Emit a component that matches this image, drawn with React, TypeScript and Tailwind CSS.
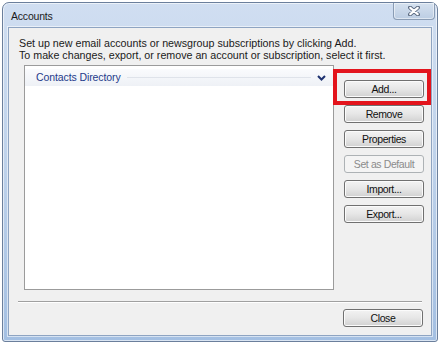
import React from 'react';

const font = { fontFamily: '"Liberation Sans", Arial, sans-serif' };

function WinButton({ label, disabled }: { label: string; disabled?: boolean }) {
  return (
    <button
      disabled={disabled}
      className={
        disabled
          ? 'relative h-[18px] w-[80px] rounded-[3px] border border-[#adb2b5] bg-[#f4f4f4] text-[10.5px] tracking-[-0.4px] leading-none text-[#8b8b8b]'
          : 'relative h-[18px] w-[80px] rounded-[3px] border border-[#707070] bg-gradient-to-b from-[#f3f3f3] via-[#e6e6e6] to-[#d1d1d1] text-[10.5px] tracking-[-0.4px] leading-none text-[#111] shadow-[inset_0_0_0_1px_#fbfbfb]'
      }
    >
      {label}
    </button>
  );
}

function TitleClose() {
  return (
    <div className="flex h-[17px] w-[42px] items-center justify-center rounded-b-[4px] border border-t-0 border-[#8a9cb4] bg-gradient-to-b from-[#d5e1ef] to-[#bccde3] shadow-[inset_0_0_0_1px_rgba(255,255,255,0.5)]">
      <svg width="12" height="10" viewBox="0 0 12 10">
        <path d="M2 1.5 L10 8.5 M10 1.5 L2 8.5" stroke="#5b6a80" strokeWidth="4" strokeLinecap="round" />
        <path d="M2.3 1.8 L9.7 8.2 M9.7 1.8 L2.3 8.2" stroke="#ffffff" strokeWidth="2.2" strokeLinecap="round" />
      </svg>
    </div>
  );
}

export default function App() {
  return (
    <div className="relative h-[343px] w-[440px] overflow-hidden bg-white" style={font}>
      <div className="ml-[2px] mt-[2px] flex h-[340px] w-[436px] flex-col rounded-t-[7px] rounded-b-[3px] border border-[#6b7f9c] bg-gradient-to-b from-[#d0def1] via-[#bdd1ea] to-[#a3bfe2] shadow-[inset_0_0_0_1px_rgba(255,255,255,0.6)]">
        {/* title bar */}
        <div className="flex h-[24px] items-start justify-between pl-[8px] pr-[2px]">
          <span className="mt-[7px] text-[10.5px] tracking-[-0.2px] leading-[13px] text-[#1b1b1b]">Accounts</span>
          <TitleClose />
        </div>

        {/* client area */}
        <div className="mx-[5px] flex h-[309px] flex-col border border-[#8ea4c2] bg-[#f0f0f0] shadow-[0_0_0_1px_rgba(255,255,255,0.55)]">
          <div className="pl-[10px] pt-[9px] text-[10.7px] leading-[12px] text-[#1a1a1a]">
            <div>Set up new email accounts or newsgroup subscriptions by clicking Add.</div>
            <div>To make changes, export, or remove an account or subscription, select it first.</div>
          </div>

          <div className="mt-[4px] flex">
            <div className="ml-[15px] h-[225px] w-[310px] border border-[#9b9b9b] bg-white">
              <div className="mt-[3px] flex h-[17px] items-center bg-gradient-to-b from-[#fafbfd] to-[#eef1f6] pl-[11px] pr-[7px]">
                <span className="text-[10.5px] tracking-[-0.1px] leading-none text-[#1e3a8a]">Contacts Directory</span>
                <div className="mx-[6px] h-px flex-1 bg-[#dfe3ea]" />
                <svg width="9" height="6" viewBox="0 0 9 6">
                  <path d="M1 1 L4.5 4.5 L8 1" stroke="#1e3270" strokeWidth="2" fill="none" />
                </svg>
              </div>
            </div>

            <div className="ml-[10px] mt-[15px] flex flex-col gap-[7px]">
              <WinButton label="Add..." />
              <WinButton label="Remove" />
              <WinButton label="Properties" />
              <WinButton label="Set as Default" disabled />
              <WinButton label="Import..." />
              <WinButton label="Export..." />
            </div>
          </div>

          <div className="ml-[9px] mt-[11px] w-[404px] border-t border-b border-t-[#a0a0a0] border-b-white" />

          <div className="mt-[6px] flex justify-end pr-[8px]">
            <WinButton label="Close" />
          </div>
        </div>
      </div>

      {/* highlight annotation */}
      <div className="absolute left-[333px] top-[69px] h-[36px] w-[98px] border-[4px] border-[#e3141c]" />
    </div>
  );
}
